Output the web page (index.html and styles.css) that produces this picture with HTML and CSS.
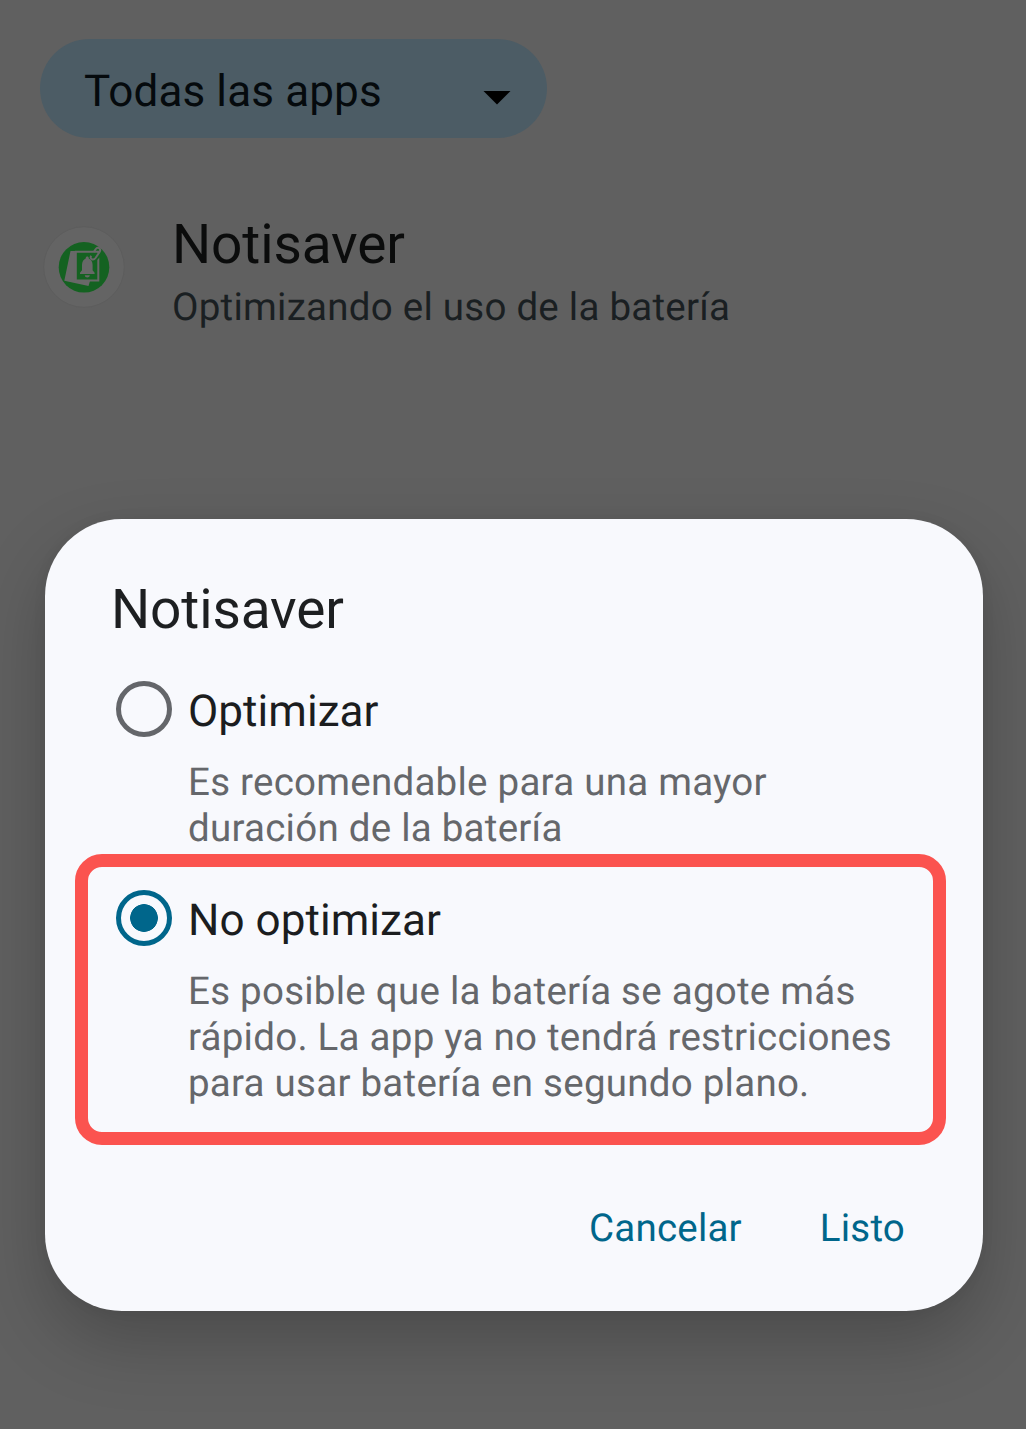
FILE: index.html
```html
<!DOCTYPE html>
<html lang="es">
<head>
<meta charset="utf-8">
<title>Optimización de batería</title>
<link rel="stylesheet" href="styles.css">
</head>
<body>
<main class="screen">
  <div class="filter">
    <span class="filter-label">Todas las apps</span>
    <svg class="filter-arrow" width="28" height="14" viewBox="0 0 28 14"><path d="M0.5 0H27.5L14 13.5Z"/></svg>
  </div>
  <div class="app">
    <svg class="app-icon" width="84" height="84" viewBox="0 0 84 84">
      <circle cx="42" cy="42" r="40.3" fill="#646464" stroke="#5d5d5d" stroke-width="1"/>
      <circle cx="42" cy="42.3" r="25.3" fill="#146221"/>
      <path d="M28.5 26H34V56H48L46.5 61 22.3 55.8Z" fill="#686868"/>
      <path d="M33.8 26.8H56.3V55.5H33.8Z" fill="#146221" stroke="#686868" stroke-width="2"/>
      <path d="M38 49V47.8L40 45.3V40C40 36.5 41.6 34.2 43.7 33.4C43.7 31 46.8 31 46.8 33.4C49 34.2 50.6 36.5 50.6 40V45.3L52.6 47.8V49ZM42.8 50.2H47.8C47.8 53.2 42.8 53.2 42.8 50.2Z" fill="#686868"/>
      <path d="M49 28H58V32L53 37L47 33Z" fill="#146221"/>
      <path d="M51.8 27 53.6 24.2C55.5 21.4 59.5 23.4 57.7 26.8L53.5 33C51.2 36 47.2 33.7 49.2 30.8" fill="none" stroke="#686868" stroke-width="2"/>
    </svg>
    <div class="app-text">
      <div class="app-name">Notisaver</div>
      <div class="app-status">Optimizando el uso de la batería</div>
    </div>
  </div>
  <section class="dialog">
    <h1 class="dialog-title">Notisaver</h1>
    <div class="option">
      <span class="radio"></span>
      <div class="option-text">
        <div class="option-title">Optimizar</div>
        <div class="option-desc">Es recomendable para una mayor<br>duración de la batería</div>
      </div>
    </div>
    <div class="option option-highlighted">
      <span class="radio radio-checked"></span>
      <div class="option-text">
        <div class="option-title">No optimizar</div>
        <div class="option-desc">Es posible que la batería se agote más<br>rápido. La app ya no tendrá restricciones<br>para usar batería en segundo plano.</div>
      </div>
    </div>
    <div class="actions">
      <span class="action">Cancelar</span>
      <span class="action">Listo</span>
    </div>
  </section>
</main>
</body>
</html>
```
FILE: styles.css
```css
* { box-sizing: border-box; }

body {
  margin: 0;
  background: #606060;
  font-family: Roboto, sans-serif;
  text-rendering: geometricPrecision;
}

.screen {
  height: 1429px;
  padding: 39px 43px 0 40px;
  overflow: hidden;
  white-space: nowrap;
}

.filter {
  display: flex;
  justify-content: space-between;
  width: 507px;
  height: 99px;
  padding: 26px 36px 0 44px;
  border-radius: 50px;
  background: #4c5c65;
}

.filter-label {
  font-size: 44px;
  line-height: 52px;
  letter-spacing: 0.13px;
  color: #050a0d;
}

.filter-arrow { margin-top: 26px; }

.app {
  display: flex;
  gap: 46px;
  margin: 74px 0 0 2px;
}

.app-icon { margin-top: 13px; }

.app-text { padding-top: 1px; }

.app-name {
  font-size: 55px;
  line-height: 64px;
  letter-spacing: -0.13px;
  color: #0b0c0c;
}

.app-status {
  margin-top: 8px;
  font-size: 38.5px;
  line-height: 46px;
  letter-spacing: 0.25px;
  color: #1a1f22;
}

.dialog {
  height: 792px;
  margin: 188px 0 0 5px;
  padding: 59px 37px 0 30px;
  border-radius: 77px;
  background: #f8f9fd;
  box-shadow: 0 30px 70px rgba(0, 0, 0, 0.22), 0 0 14px rgba(0, 0, 0, 0.05);
}

.dialog-title {
  margin: 0 0 43px 36px;
  font-size: 55px;
  font-weight: 400;
  line-height: 64px;
  letter-spacing: -0.13px;
  color: #1d1f21;
}

.option {
  display: flex;
  gap: 16px;
  padding-left: 41px;
}

.option-highlighted {
  height: 291px;
  margin-top: 2px;
  padding: 27px 0 0 28px;
  border: 13px solid #fb534f;
  border-radius: 27px;
}

.radio {
  width: 56px;
  height: 56px;
  margin-top: -4px;
  border: 5.5px solid #64666a;
  border-radius: 50%;
}

.radio-checked {
  border-color: #00668b;
  background: radial-gradient(circle, #00668b 13.5px, transparent 14.2px);
}

.option-title {
  font-size: 44px;
  line-height: 52px;
  letter-spacing: 0.05px;
  color: #1b1d1f;
}

.option-desc {
  margin-top: 23px;
  font-size: 38.5px;
  line-height: 46px;
  letter-spacing: 0.25px;
  color: #65676b;
}

.actions {
  display: flex;
  justify-content: flex-end;
  gap: 78px;
  margin: 61px 41px 0 0;
}

.action {
  font-size: 38.5px;
  line-height: 46px;
  letter-spacing: 0.2px;
  color: #00668b;
}
```
